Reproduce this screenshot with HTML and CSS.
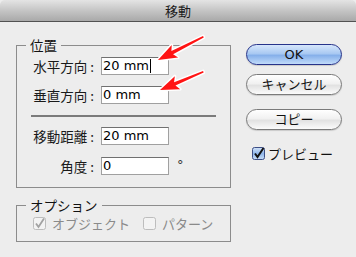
FILE: index.html
```html
<!DOCTYPE html>
<html lang="ja">
<head>
    <meta charset="UTF-8">
    <meta name="viewport" content="width=device-width, initial-scale=1.0">
    <title>移動</title>
    <link rel="stylesheet" href="styles.css">
</head>
<body>
    <div class="window">
        <div class="titlebar">移動</div>
        <div class="content">
            <div class="left">
                <fieldset class="group">
                    <legend>位置</legend>
                    <div class="row">
                        <span class="label">水平方向 :</span>
                        <div class="field">20 mm<span class="caret"></span></div>
                    </div>
                    <div class="row">
                        <span class="label">垂直方向 :</span>
                        <div class="field">0 mm</div>
                    </div>
                    <div class="sep"></div>
                    <div class="row">
                        <span class="label">移動距離 :</span>
                        <div class="field">20 mm</div>
                    </div>
                    <div class="row">
                        <span class="label">角度 :</span>
                        <div class="field">0</div>
                        <span class="unit">°</span>
                    </div>
                </fieldset>
                <fieldset class="group options">
                    <legend>オプション</legend>
                    <div class="checks">
                        <span class="check disabled">
                            <svg width="13" height="13" viewBox="0 0 13 13">
                                <rect x="0.5" y="0.5" width="12" height="12" rx="2" fill="#f3f3f3" stroke="#bdbdbd"/>
                                <path d="M3 6.5 L5.5 10 L11 1.5" fill="none" stroke="#a2a2a2" stroke-width="1.8"/>
                            </svg>
                            オブジェクト
                        </span>
                        <span class="check disabled">
                            <svg width="13" height="13" viewBox="0 0 13 13">
                                <rect x="0.5" y="0.5" width="12" height="12" rx="2" fill="#f3f3f3" stroke="#bdbdbd"/>
                            </svg>
                            パターン
                        </span>
                    </div>
                </fieldset>
            </div>
            <div class="right">
                <button class="btn default">OK</button>
                <button class="btn cancel">キャンセル</button>
                <button class="btn copy">コピー</button>
                <span class="check preview">
                    <svg width="13" height="13" viewBox="0 0 13 13">
                        <defs>
                            <linearGradient id="blue" x1="0" y1="0" x2="0" y2="1">
                                <stop offset="0" stop-color="#d3e3f8"/>
                                <stop offset="0.5" stop-color="#8fb6ea"/>
                                <stop offset="1" stop-color="#c9def8"/>
                            </linearGradient>
                        </defs>
                        <rect x="0.5" y="0.5" width="12" height="12" rx="2" fill="url(#blue)" stroke="#3d4f86"/>
                        <path d="M3 6.5 L5.5 10 L11.5 1" fill="none" stroke="#111" stroke-width="2"/>
                    </svg>
                    プレビュー
                </span>
            </div>
        </div>
        <!-- 注釈の赤い矢印 -->
        <svg class="arrows" width="356" height="257" viewBox="0 0 356 257">
            <g transform="translate(158 60) rotate(152.9)">
                <polygon class="arrow" points="-51,-0.8 -16,-1.8 -19,-7 0,0 -19,7 -16,1.8 -51,0.8"/>
            </g>
            <g transform="translate(160 90) rotate(157.3)">
                <polygon class="arrow" points="-47,-0.8 -16,-1.8 -19,-7 0,0 -19,7 -16,1.8 -47,0.8"/>
            </g>
        </svg>
    </div>
</body>
</html>
```

FILE: styles.css
```css
*{
    margin: 0;
    padding: 0;
    box-sizing: border-box;
}
body{
    background-color: #ededed;
    font-family: "DejaVu Sans", "Noto Sans CJK JP", sans-serif;
    font-size: 13px;
    color: #111;
}
.window{
    position: relative;
    width: 356px;
    height: 257px;
    overflow: hidden;
    background-color: #ededed;
}
.titlebar{
    height: 22px;
    border-bottom: 1px solid #525252;
    border-radius: 5px 5px 0 0;
    background: linear-gradient(#e4e4e4, #c2c2c2 55%, #a9a9a9);
    text-align: center;
    font: 13px/21px "Noto Sans CJK JP", sans-serif;
    color: #1c1c1c;
}
.content{
    display: flex;
    gap: 15px;
    padding-left: 16px;
}
.left{
    width: 215px;
    padding-top: 15px;
}
.group{
    border: 1px solid #8c8c8c;
    padding: 4px 14px 12px;
    min-width: 0;
}
.group legend{
    margin-left: -5px;
    padding: 0 4px;
    font: 13.5px/16px "Noto Sans CJK JP", sans-serif;
    color: #111;
}
.row{
    display: flex;
    align-items: center;
    height: 18px;
}
.row + .row{
    margin-top: 11px;
}
.sep + .row{
    margin-top: 0;
}
.row:last-child{
    margin-top: 12px;
}
.label{
    width: 63px;
    margin-right: 7px;
    text-align: right;
    white-space: nowrap;
    font-family: "Noto Sans CJK JP", sans-serif;
    font-size: 13.5px;
    color: #1a1a1a;
}
.field{
    display: flex;
    align-items: center;
    width: 68px;
    height: 18px;
    padding-left: 1px;
    background-color: #fff;
    border: 1px solid #a0a0a0;
    border-top-color: #707070;
    line-height: 16px;
    color: #000;
}
.caret{
    display: inline-block;
    width: 1px;
    height: 14px;
    margin-left: 1px;
    background-color: #000;
}
.unit{
    margin-left: 8px;
    margin-top: -4px;
    color: #333;
}
.sep{
    height: 2px;
    margin: 11px 0 10px;
    background-color: #7b7b7b;
}
.options{
    margin-top: 9px;
    padding: 3px 14px 10px;
}
.checks{
    display: flex;
    align-items: center;
    gap: 13px;
    height: 15px;
    padding-left: 2px;
}
.check{
    display: flex;
    align-items: center;
    gap: 6px;
    font-family: "Noto Sans CJK JP", sans-serif;
    font-size: 13px;
    line-height: 15px;
}
.check svg{
    display: block;
    flex: none;
}
.disabled{
    color: #8a8a8a;
}
.right{
    display: flex;
    flex-direction: column;
    width: 96px;
    padding-top: 22px;
}
.btn{
    height: 21px;
    border-radius: 11px;
    border: 1px solid #7a7a7a;
    background: linear-gradient(#ffffff, #f1f1f1 45%, #e2e2e2 55%, #fbfbfb);
    font: 13px/19px "DejaVu Sans", "Noto Sans CJK JP", sans-serif;
    color: #111;
    box-shadow: 0 1px 1px rgba(0, 0, 0, 0.15);
}
.default{
    border-color: #27338a;
    background: linear-gradient(#d6e6fb, #a9c9f2 45%, #86b0ea 55%, #c1dbfa);
}
.cancel{
    margin-top: 9px;
}
.copy{
    margin-top: 14px;
}
.preview{
    margin-top: 16px;
    padding-left: 6px;
    gap: 3px;
    color: #111;
}
.arrows{
    position: absolute;
    left: 0;
    top: 0;
    pointer-events: none;
}
.arrow{
    fill: #ff1414;
    stroke: #fff;
    stroke-width: 3;
    stroke-linejoin: round;
    paint-order: stroke;
}
```
